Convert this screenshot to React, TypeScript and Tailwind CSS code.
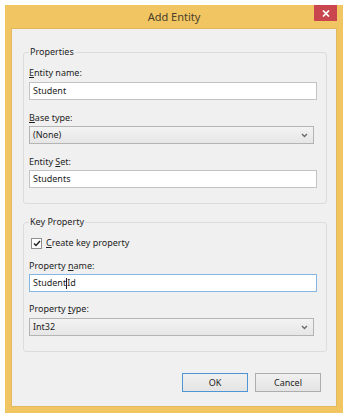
import React from "react";

const Label = ({ pre, key1, post, className = "" }: { pre?: string; key1: string; post: string; className?: string }) => (
  <div className={`h-[14px] leading-[14px] ${className}`}>
    {pre}
    <span className="underline underline-offset-1">{key1}</span>
    {post}
  </div>
);

const TextBox = ({ value, className = "" }: { value: string; className?: string }) => (
  <div className={`w-[288px] h-[18px] bg-white border border-[#c3c3c3] pl-[3px] leading-[16px] ${className}`}>{value}</div>
);

const Combo = ({ value, className = "" }: { value: string; className?: string }) => (
  <div
    className={`w-[285px] h-[18px] border border-[#b4b4b4] bg-gradient-to-b from-[#f3f3f3] to-[#e6e6e6] pl-[3px] pr-[5px] flex items-center justify-between ${className}`}
  >
    <span className="leading-[16px]">{value}</span>
    <svg width="7" height="5" viewBox="0 0 7 5">
      <path d="M1 1 L3.5 3.5 L6 1" fill="none" stroke="#6a6a6a" strokeWidth="1.4" />
    </svg>
  </div>
);

const GroupBox = ({ title, className = "", children }: { title: string; className?: string; children: React.ReactNode }) => (
  <fieldset className={`w-[304px] border border-[#dcdcdc] rounded-[3px] px-[5px] ${className}`}>
    <legend className="px-[1px] h-[14px] leading-[14px]">{title}</legend>
    <div className="flex flex-col">{children}</div>
  </fieldset>
);

export default function App() {
  return (
    <div className="w-[349px] h-[418px] bg-white pl-[5px] pt-[5px] font-['Noto_Sans',sans-serif] text-[9px] text-[#1e1e1e]">
      <div className="w-[338px] h-[408px] bg-[#f1c561] flex flex-col px-[6px] pb-[6px]">
        {/* title bar */}
        <div className="h-[23px] grid grid-cols-[23px_1fr_23px]">
          <div />
          <div className="flex items-center justify-center text-[11px] text-[#4a412d] pt-[1px]">Add Entity</div>
          <div className="h-[16px] bg-[#c9464e] flex items-center justify-center">
            <svg width="8" height="7" viewBox="0 0 8 7">
              <path d="M1 0.5 L7 6.5 M7 0.5 L1 6.5" stroke="white" strokeWidth="1.7" />
            </svg>
          </div>
        </div>

        {/* client area */}
        <div className="flex-1 bg-[#f0f0f0] border border-[#e2b95d] pl-[11px] pr-[10px] pt-[16px] flex flex-col">
          <GroupBox title="Properties" className="pb-[15px]">
            <Label key1="E" post="ntity name:" className="mt-[7px]" />
            <TextBox value="Student" className="mt-[2px]" />
            <Label key1="B" post="ase type:" className="mt-[11px]" />
            <Combo value="(None)" className="mt-[1px]" />
            <Label pre="Entity " key1="S" post="et:" className="mt-[11px]" />
            <TextBox value="Students" className="mt-[1px]" />
          </GroupBox>

          <GroupBox title="Key Property" className="mt-[11px] pb-[15px]">
            <div className="mt-[7px] h-[14px] flex items-center ml-[2px] gap-[4px]">
              <div className="w-[11px] h-[11px] bg-white border border-[#8f8f8f] flex items-center justify-center">
                <svg width="8" height="7" viewBox="0 0 8 7">
                  <path d="M1 3.5 L3 5.5 L7 1" fill="none" stroke="#222" strokeWidth="1.5" />
                </svg>
              </div>
              <Label key1="C" post="reate key property" />
            </div>
            <Label pre="Property " key1="n" post="ame:" className="mt-[9px]" />
            <div className="mt-[1px] w-[288px] h-[18px] bg-white border border-[#86b6e6] pl-[3px] leading-[16px] flex items-center">
              <span>Student</span>
              <span className="w-[1px] h-[11px] bg-[#1a1a40]" />
              <span>Id</span>
            </div>
            <Label pre="Property " key1="t" post="ype:" className="mt-[10px]" />
            <Combo value="Int32" className="mt-[2px]" />
          </GroupBox>

          <div className="mt-[21px] flex justify-end gap-[7px] pr-[5px]">
            <button className="w-[66px] h-[19px] border border-[#4f94d4] bg-gradient-to-b from-[#f0f0f0] to-[#e4e4e4] text-[9px]">
              OK
            </button>
            <button className="w-[66px] h-[19px] border border-[#adadad] bg-gradient-to-b from-[#f0f0f0] to-[#e4e4e4] text-[9px]">
              Cancel
            </button>
          </div>
        </div>
      </div>
    </div>
  );
}
